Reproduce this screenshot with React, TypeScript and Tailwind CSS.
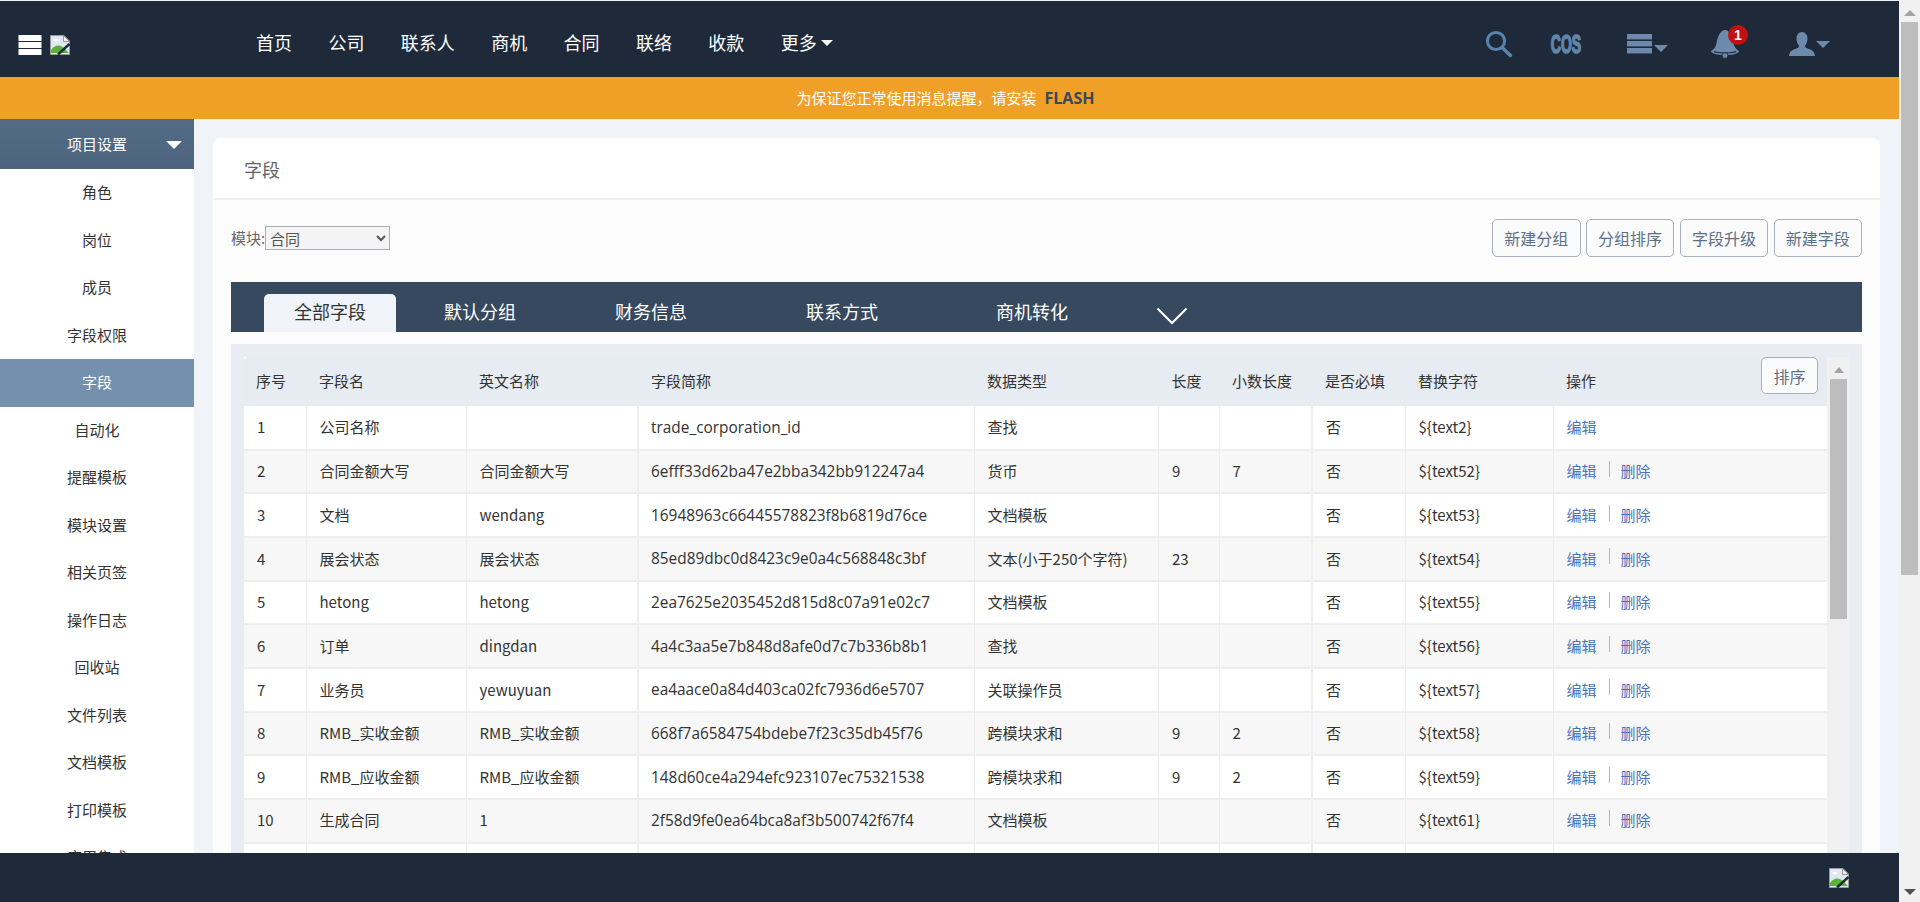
import React from "react";

const font = { fontFamily: '"Noto Sans CJK SC", sans-serif' };
const latin = { fontFamily: '"Open Sans", "Noto Sans CJK SC", sans-serif' };

const nav = ["首页", "公司", "联系人", "商机", "合同", "联络", "收款"];
const side = ["角色", "岗位", "成员", "字段权限", "字段", "自动化", "提醒模板", "模块设置", "相关页签", "操作日志", "回收站", "文件列表", "文档模板", "打印模板", "应用集成"];
const heads = ["序号", "字段名", "英文名称", "字段简称", "数据类型", "长度", "小数长度", "是否必填", "替换字符", "操作"];
const widths = [62, 160, 172, 336, 184.5, 60.5, 93, 93, 148, 274];
const rows: string[][] = [
  ["1", "公司名称", "", "trade_corporation_id", "查找", "", "", "否", "${text2}"],
  ["2", "合同金额大写", "合同金额大写", "6efff33d62ba47e2bba342bb912247a4", "货币", "9", "7", "否", "${text52}"],
  ["3", "文档", "wendang", "16948963c66445578823f8b6819d76ce", "文档模板", "", "", "否", "${text53}"],
  ["4", "展会状态", "展会状态", "85ed89dbc0d8423c9e0a4c568848c3bf", "文本(小于250个字符)", "23", "", "否", "${text54}"],
  ["5", "hetong", "hetong", "2ea7625e2035452d815d8c07a91e02c7", "文档模板", "", "", "否", "${text55}"],
  ["6", "订单", "dingdan", "4a4c3aa5e7b848d8afe0d7c7b336b8b1", "查找", "", "", "否", "${text56}"],
  ["7", "业务员", "yewuyuan", "ea4aace0a84d403ca02fc7936d6e5707", "关联操作员", "", "", "否", "${text57}"],
  ["8", "RMB_实收金额", "RMB_实收金额", "668f7a6584754bdebe7f23c35db45f76", "跨模块求和", "9", "2", "否", "${text58}"],
  ["9", "RMB_应收金额", "RMB_应收金额", "148d60ce4a294efc923107ec75321538", "跨模块求和", "9", "2", "否", "${text59}"],
  ["10", "生成合同", "1", "2f58d9fe0ea64bca8af3b500742f67f4", "文档模板", "", "", "否", "${text61}"],
  ["", "", "", "", "", "", "", "", ""],
];

function BrokenImage({ slash }: { slash: string }) {
  return (
    <svg width="20" height="20" viewBox="0 0 20 20">
      <path d="M0.5 0.5H14L19.5 6V19.5H0.5Z" fill="#dfe6f4" stroke="#9a9a9a" />
      <path d="M13.5 0.5V6.5H19.5Z" fill="#f4f4f4" stroke="#9a9a9a" />
      <path d="M3 5.5c1-2 5-2 6 0c-1 1-5 1-6 0Z" fill="#ffffff" />
      <path d="M1 18V15C5 9 11 9 16 15L19 18Z" fill="#5cb03c" />
      <path d="M8 19.5L19.5 9" stroke={slash} strokeWidth="2.4" />
    </svg>
  );
}

function Caret({ color, w = 14, h = 7 }: { color: string; w?: number; h?: number }) {
  return (
    <svg width={w} height={h} viewBox="0 0 14 7">
      <path d="M0 0H14L7 7Z" fill={color} />
    </svg>
  );
}

export default function App() {
  return (
    <div className="flex h-[902px] w-[1920px] overflow-hidden bg-[#f1f1f1]" style={font}>
      <div className="flex h-full w-[1899px] flex-col pt-px">
        <header className="flex h-[76px] shrink-0 items-center bg-[#1e2a3a]">
          <div className="flex w-[256px] shrink-0 items-center pl-[18px] pt-[11px]">
            <svg width="24" height="20" viewBox="0 0 24 20">
              <rect x="0.5" y="0" width="23" height="6" fill="#ffffff" />
              <rect x="0.5" y="7" width="23" height="6" fill="#ffffff" />
              <rect x="0.5" y="14" width="23" height="6" fill="#ffffff" />
            </svg>
            <span className="ml-[8px] flex">
              <BrokenImage slash="#1e2a3a" />
            </span>
          </div>
          <nav className="flex items-center gap-[36.4px] pt-[7px] text-[18px] text-white">
            {nav.map((n) => (
              <a key={n}>{n}</a>
            ))}
            <a className="flex items-center gap-[4px]">
              更多
              <Caret color="#ffffff" w={12} h={6} />
            </a>
          </nav>
          <div className="ml-auto flex items-center pt-[10px]">
            <svg className="mr-[38px]" width="28" height="28" viewBox="0 0 28 28" fill="none">
              <circle cx="11" cy="11" r="8.6" stroke="#5a83ab" strokeWidth="3" />
              <path d="M17 17.5L25.5 25.5" stroke="#5a83ab" strokeWidth="3.4" strokeLinecap="round" />
            </svg>
            <span
              className="mr-[46px] flex w-[30px] scale-x-[0.56] justify-center text-[25px] leading-none font-bold text-[#6085ab]"
              style={{ fontFamily: '"Liberation Sans", sans-serif', WebkitTextStroke: "1.6px #6085ab" }}
            >
              COS
            </span>
            <span className="mr-[42px] flex items-end gap-[1px]">
              <svg width="26" height="20" viewBox="0 0 26 20">
                <rect width="25" height="5.4" y="0" fill="#6d8aac" />
                <rect width="25" height="5.4" y="7" fill="#6d8aac" />
                <rect width="25" height="5.4" y="14" fill="#6d8aac" />
              </svg>
              <span className="mb-[2px] flex">
                <Caret color="#6d8aac" />
              </span>
            </span>
            <span className="relative mr-[49px] flex">
              <svg width="30" height="30" viewBox="0 0 30 30">
                <path d="M15 1c2.500 0 4.500 2 6 5c1.500 3 2 5 2.500 8c.5 3.500 2 6 5.500 8c0 2.500-6 4-14 4S1 24.500 1 22c3.500-2 5-4.500 5.500-8c.5-3 1-5 2.500-8c1.500-3 3.500-5 6-5Z" fill="#6d8aac" />
                <path d="M4 22.500c3 1.800 19 1.800 22 0" fill="none" stroke="#1e2a3a" strokeWidth="1.400" />
                <circle cx="15" cy="26.500" r="3" fill="#6d8aac" stroke="#1e2a3a" strokeWidth="1" />
              </svg>
              <span
                className="absolute top-[-4px] left-[18px] flex h-[20px] w-[20px] items-center justify-center rounded-full bg-[#c40f0f] text-[14px] font-bold text-white"
                style={{ fontFamily: '"Liberation Sans", sans-serif' }}
              >
                1
              </span>
            </span>
            <span className="mr-[69px] flex items-center gap-[1px]">
              <svg width="26" height="24" viewBox="0 0 26 24">
                <path d="M13 0c3.500 0 5.500 3 5.500 6.500c0 3-1 5.500-2.500 7c0 2 1 2.500 4 3.500c3 1 5.500 2.500 6 7H0c.5-4.500 3-6 6-7s4-1.500 4-3.500c-1.500-1.500-2.500-4-2.500-7C7.500 3 9.500 0 13 0Z" fill="#6d8aac" />
              </svg>
              <Caret color="#6d8aac" />
            </span>
          </div>
        </header>

        <div className="flex h-[42px] shrink-0 items-center justify-center bg-[#f0a026] pr-[8px] text-[15px] text-white">
          <span>为保证您正常使用消息提醒，请安装</span>
          <span className="ml-[8px] text-[16px] font-bold text-[#36495e]" style={{ fontFamily: '"Open Sans", sans-serif' }}>
            FLASH
          </span>
        </div>

        <div className="flex min-h-0 flex-1 bg-[#f0f4f8]">
          <aside className="w-[194px] shrink-0 overflow-hidden bg-white text-[15px] text-[#333333]">
            <div className="relative flex h-[50px] items-center justify-center bg-linear-to-b from-[#536b85] to-[#4c647e] text-white">
              项目设置
              <span className="absolute top-[22px] left-[166px] flex">
                <Caret color="#ffffff" w={16} h={8} />
              </span>
            </div>
            {side.map((s) => (
              <div
                key={s}
                className={
                  s === "字段"
                    ? "flex h-[47.5px] items-center justify-center bg-[#7590ad] pb-[1px] text-white"
                    : "flex h-[47.5px] items-center justify-center pb-[1px]"
                }
              >
                {s}
              </div>
            ))}
          </aside>

          <main className="min-w-0 flex-1 overflow-hidden px-[19px] pt-[19px]">
            <div className="rounded-t-[8px] bg-[#fcfcfc]">
              <div className="flex h-[62px] items-center rounded-t-[8px] border-b-2 border-[#f0f0f0] bg-white pt-[3px] pl-[31px] text-[18px] text-[#666666]">
                字段
              </div>
              <div className="px-[18px] pt-[19px]">
                <div className="flex h-[38px] items-center">
                  <label className="w-[34px] overflow-hidden text-[15px] whitespace-nowrap text-[#666666]">模块:</label>
                  <select
                    className="h-[24px] w-[125px] rounded-none border border-[#a9b0bd] bg-[#f4f4f4] text-[15px] text-[#555555]"
                    style={font}
                  >
                    <option>合同</option>
                  </select>
                  <div className="ml-auto flex gap-[5.33px]">
                    {["新建分组", "分组排序", "字段升级", "新建字段"].map((b) => (
                      <button
                        key={b}
                        className="h-[38px] w-[88.5px] rounded-[5px] border border-[#a9b0bd] bg-[#fbfbfb] text-[16px] text-[#5b7088]"
                      >
                        {b}
                      </button>
                    ))}
                  </div>
                </div>

                <div className="mt-[25px] flex h-[50px] items-end bg-[#36495e] pl-[33px] text-[18px] text-white">
                  <div className="flex h-[38px] w-[132px] items-center justify-center rounded-t-[5px] bg-[#f0f4f8] pb-[3px] text-[#333333]">
                    全部字段
                  </div>
                  <div className="flex h-[38px] items-center pb-[3px]">
                    <span className="ml-[48px]">默认分组</span>
                    <span className="ml-[99px]">财务信息</span>
                    <span className="ml-[119px]">联系方式</span>
                    <span className="ml-[118px]">商机转化</span>
                    <svg className="mt-[8px] ml-[88px]" width="32" height="18" viewBox="0 0 32 18" fill="none">
                      <path d="M1.500 1.500L16 16L30.500 1.500" stroke="#ffffff" strokeWidth="2" />
                    </svg>
                  </div>
                </div>

                <div className="mt-[12px] flex bg-[#e9edf2] pt-[13px] pl-[13px]">
                  <div className="relative w-[1583px] shrink-0 bg-white">
                    <table className="w-[1583px] table-fixed border-collapse text-[15px] text-[#333333]">
                      <colgroup>
                        {widths.map((w, i) => (
                          <col key={i} style={{ width: w }} />
                        ))}
                      </colgroup>
                      <thead>
                        <tr className="h-[49px]">
                          {heads.map((h, i) => (
                            <th
                              key={h}
                              className={
                                i === 0
                                  ? "rounded-tl-[4px] bg-[#e7ebf2] pl-[12px] text-left font-normal"
                                  : "bg-[#e7ebf2] pl-[13px] text-left font-normal"
                              }
                            >
                              {h}
                            </th>
                          ))}
                        </tr>
                      </thead>
                      <tbody>
                        {rows.map((r, ri) => (
                          <tr key={ri} className={ri % 2 === 0 ? "h-[43.67px] bg-white" : "h-[43.67px] bg-[#f7f7f7]"}>
                            {r.map((c, ci) => (
                              <td
                                key={ci}
                                style={ci === 3 ? latin : undefined}
                                className={
                                  ci === 3
                                    ? "border-r border-b-2 border-[#eeeeee] pl-[12px] text-[15.4px] whitespace-nowrap"
                                    : ci === 2 || ci === 6
                                      ? "border-r-2 border-b-2 border-[#eeeeee] pl-[13px] whitespace-nowrap"
                                      : "border-r border-b-2 border-[#eeeeee] pl-[13px] whitespace-nowrap"
                                }
                              >
                                {c}
                              </td>
                            ))}
                            <td className="border-b-2 border-[#eeeeee] pl-[13px] text-[15px] text-[#4a72bc]">
                              {ri < 10 && (
                                <span className="flex items-center">
                                  <a>编辑</a>
                                  {ri > 0 && (
                                    <>
                                      <span className="mr-[11px] mb-[5px] ml-[12px] h-[16px] w-px bg-[#b5b5b5]" />
                                      <a>删除</a>
                                    </>
                                  )}
                                </span>
                              )}
                            </td>
                          </tr>
                        ))}
                      </tbody>
                    </table>
                    <button className="absolute top-0 right-[9px] h-[37px] w-[57px] rounded-[5px] border border-[#a9b0bd] bg-[#fbfbfb] text-[16px] text-[#5b7088]">
                      排序
                    </button>
                  </div>
                  <div className="flex w-[22px] shrink-0 flex-col items-center bg-[#f0f0f0] pt-[10px] pl-[1px]">
                    <svg width="10" height="6" viewBox="0 0 10 6">
                      <path d="M0 6H10L5 0Z" fill="#a3a3a3" />
                    </svg>
                    <div className="mt-[6px] h-[240px] w-[17px] bg-[#bdbdbd]" />
                  </div>
                  <div className="w-[12px] shrink-0" />
                </div>
              </div>
            </div>
          </main>
        </div>

        <footer className="flex h-[49px] shrink-0 items-start justify-end bg-[#1e2a3a] pt-[15px] pr-[50px]">
          <BrokenImage slash="#1e2a3a" />
        </footer>
      </div>

      <div className="flex w-[21px] shrink-0 flex-col items-center pt-[10px] pb-[7px]">
        <svg width="12" height="6" viewBox="0 0 12 6">
          <path d="M0 6H12L6 0Z" fill="#a3a3a3" />
        </svg>
        <div className="mt-[6px] h-[553px] w-[17px] bg-[#bdbdbd]" />
        <svg className="mt-auto" width="12" height="6" viewBox="0 0 12 6">
          <path d="M0 0H12L6 6Z" fill="#505050" />
        </svg>
      </div>
    </div>
  );
}
